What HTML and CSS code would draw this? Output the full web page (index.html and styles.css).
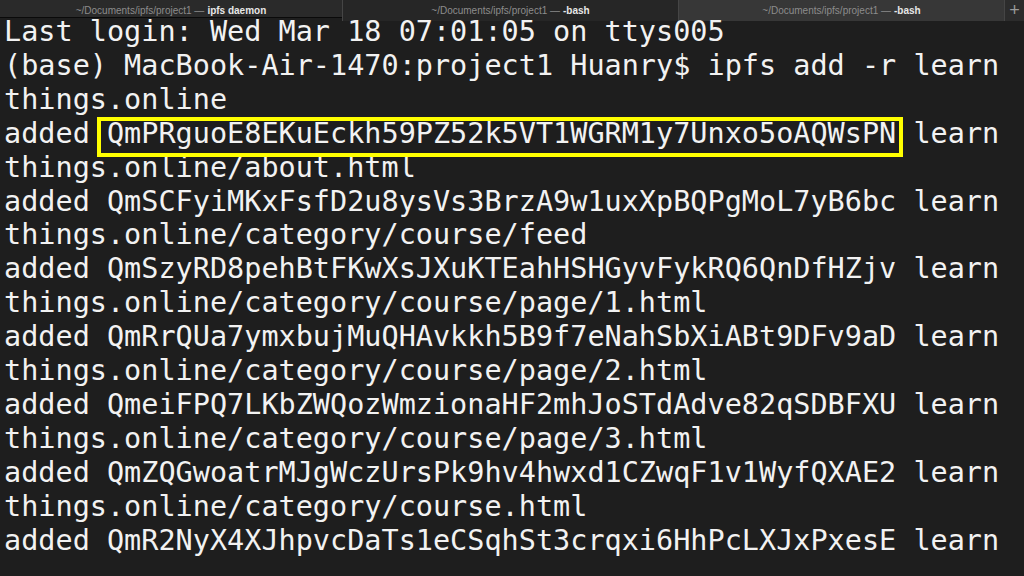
FILE: index.html
```html
<!DOCTYPE html>
<html lang="en">

<head>
    <meta charset="UTF-8">
    <title>~/Documents/ipfs/project1 — -bash</title>
    <link rel="stylesheet" href="styles.css">
</head>

<body>
    <!-- Tab bar -->
    <div class="tabs">
        <div class="tab">~/Documents/ipfs/project1 — <b>ipfs daemon</b></div>
        <div class="tab tab-dim">~/Documents/ipfs/project1 — <b>-bash</b></div>
        <div class="tab tab-active">~/Documents/ipfs/project1 — <b>-bash</b></div>
        <div class="tab tab-add">+</div>
    </div>

    <!-- Terminal output -->
    <pre class="terminal">Last login: Wed Mar 18 07:01:05 on ttys005
(base) MacBook-Air-1470:project1 Huanry$ ipfs add -r learn
things.online
added <span class="mark">QmPRguoE8EKuEckh59PZ52k5VT1WGRM1y7Unxo5oAQWsPN</span> learn
things.online/about.html
added QmSCFyiMKxFsfD2u8ysVs3BrzA9w1uxXpBQPgMoL7yB6bc learn
things.online/category/course/feed
added QmSzyRD8pehBtFKwXsJXuKTEahHSHGyvFykRQ6QnDfHZjv learn
things.online/category/course/page/1.html
added QmRrQUa7ymxbujMuQHAvkkh5B9f7eNahSbXiABt9DFv9aD learn
things.online/category/course/page/2.html
added QmeiFPQ7LKbZWQozWmzionaHF2mhJoSTdAdve82qSDBFXU learn
things.online/category/course/page/3.html
added QmZQGwoatrMJgWczUrsPk9hv4hwxd1CZwqF1v1WyfQXAE2 learn
things.online/category/course.html
added QmR2NyX4XJhpvcDaTs1eCSqhSt3crqxi6HhPcLXJxPxesE learn</pre>
</body>

</html>
```

FILE: styles.css
```css
html,
body {
    height: 100%;
    margin: 0;
    padding: 0;
}

body {
    background-color: #1e1e1e;
    overflow: hidden;
}

/* tab strip along the top */
.tabs {
    display: grid;
    grid-template-columns: 343px 336px 326px 1fr;
    height: 17px;
    border-bottom: 1px solid #0a0a0a;
    background-color: #2a2a2a;
    font-family: 'Liberation Sans', Arial, sans-serif;
    font-size: 10px;
    color: #8c8c8c;
}

.tab {
    display: flex;
    align-items: center;
    justify-content: center;
    border-right: 1px solid #454545;
    white-space: nowrap;
}

.tab b {
    color: #e6e6e6;
    margin-left: 3px;
}

.tab-dim {
    background-color: #262626;
}

.tab-active {
    background-color: #373737;
}

.tab-add {
    border-right: none;
    background-color: #2c2c2c;
    color: #9a9a9a;
    font-size: 18px;
    font-weight: 300;
}

.terminal {
    margin: -3px 0 0;
    padding: 0 0 0 4px;
    font-family: 'DejaVu Sans Mono', monospace;
    font-size: 28.5px;
    line-height: 33.9px;
    color: #f2f2f2;
    white-space: pre;
}

/* yellow highlight round the first hash */
.mark {
    position: relative;
}

.mark::after {
    content: '';
    position: absolute;
    left: -10px;
    right: -7px;
    top: 0;
    bottom: -7px;
    border: 4px solid #ffff00;
}
```
